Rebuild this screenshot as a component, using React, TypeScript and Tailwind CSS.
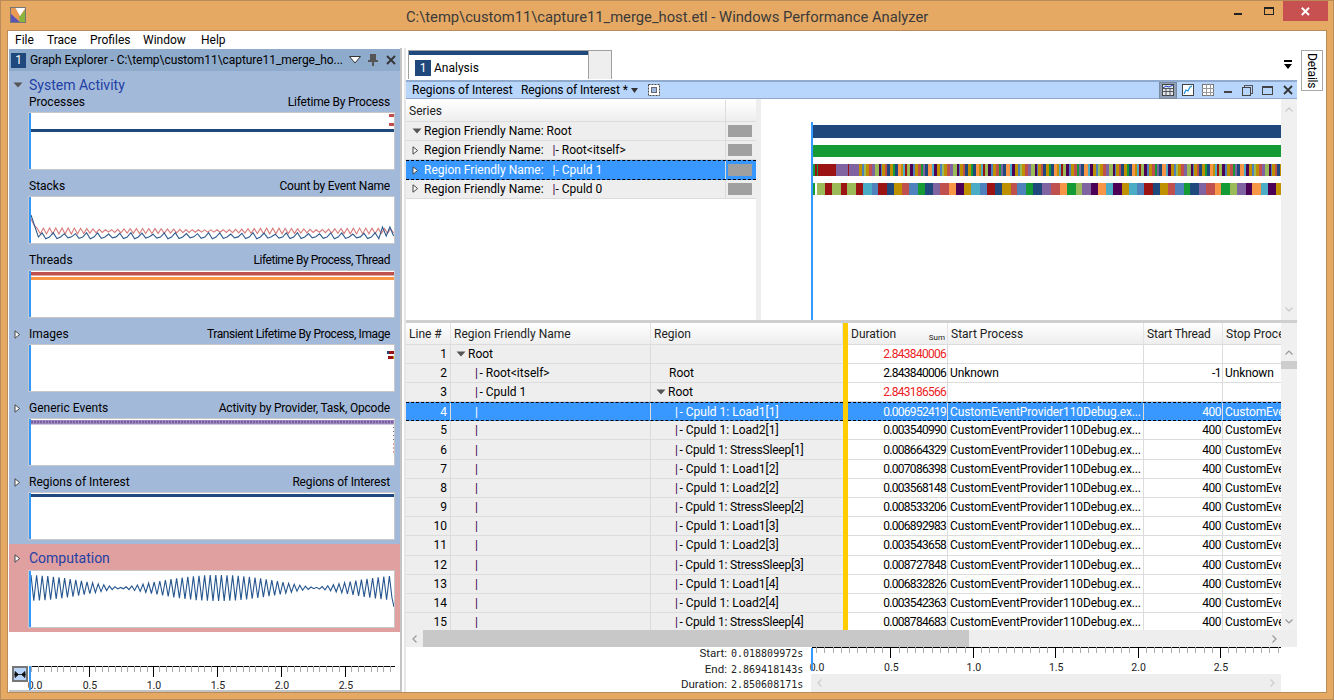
import React from "react";

const C = {
  navy: "#1f497d", green: "#149b35", lime: "#9bbb59", purple: "#8064a2", coral: "#c0504d",
  orange: "#f79646", teal: "#4bacc6", blue: "#4f81bd", red: "#9c1313", gold: "#bf9000", plum: "#4b0055",
};

function zigzag(x0: number, x1: number, step: number, f: (x: number, i: number) => number) {
  let d = "";
  let i = 0;
  for (let x = x0; x <= x1; x += step, i++) d += (i ? "L" : "M") + x.toFixed(1) + " " + f(x, i).toFixed(1);
  return d;
}

const row2: [string, number][] = [
  [C.green, 2], ["#ffffff", 2], [C.lime, 8], [C.red, 7], [C.lime, 9], [C.red, 6], [C.lime, 9], [C.red, 7], [C.teal, 9], [C.blue, 6], [C.red, 9], [C.navy, 7],
  [C.gold, 8], [C.coral, 7], [C.blue, 9], [C.green, 7], [C.navy, 8], [C.purple, 7], [C.coral, 9], [C.orange, 7], [C.plum, 8], [C.gold, 7], [C.teal, 9], [C.blue, 7],
  [C.red, 8], [C.navy, 7], [C.gold, 9], [C.coral, 6], [C.blue, 9], [C.green, 7], [C.navy, 9], [C.purple, 9], [C.coral, 9], [C.orange, 7], [C.green, 9], [C.lime, 6],
  [C.purple, 9], [C.plum, 7], [C.orange, 8], [C.teal, 7], [C.plum, 9], [C.gold, 7], [C.teal, 8], [C.blue, 7], [C.red, 9], [C.navy, 7], [C.gold, 8], [C.coral, 7],
  [C.blue, 9], [C.green, 6], [C.navy, 9], [C.purple, 7], [C.coral, 9], [C.orange, 6], [C.green, 9], [C.lime, 7], [C.purple, 9], [C.plum, 6], [C.orange, 9], [C.teal, 7], [C.plum, 8], [C.gold, 8],
];
const cycle: [string, number][] = [
  [C.gold, 3], [C.blue, 2], [C.lime, 2], [C.gold, 3], [C.coral, 3], [C.purple, 3], [C.lime, 4], [C.plum, 2], [C.blue, 1], [C.gold, 3], [C.coral, 2], [C.navy, 3],
  [C.gold, 3], [C.green, 2], [C.navy, 3], [C.orange, 3], [C.gold, 2], [C.teal, 2], [C.red, 2], [C.lime, 3], [C.plum, 3], [C.blue, 2], [C.gold, 3], [C.coral, 3], [C.green, 2], [C.purple, 2], [C.navy, 3], [C.orange, 4], [C.teal, 2], [C.plum, 3],
];
const row1: [string, number][] = [[C.green, 2], [C.red, 2], [C.green, 1], [C.red, 18], [C.purple, 12], [C.red, 1], [C.purple, 10]];
for (let used = 46, i = 0; used < 470; i++) {
  const c = cycle[i % cycle.length];
  row1.push(c);
  used += c[1];
}

function Segments({ y, data }: { y: number; data: [string, number][] }) {
  let x = 1;
  return (
    <>
      {data.map(([c, w], i) => {
        const el = <rect key={i} x={x} y={y} width={w} height={12} fill={c} />;
        x += w;
        return el;
      })}
    </>
  );
}

const TriRight = () => (
  <svg width="7" height="9" viewBox="0 0 7 9" className="block shrink-0">
    <path d="M1 .8 L5.6 4.5 L1 8.2 Z" fill="#fff" stroke="#444" strokeWidth="1" />
  </svg>
);
const TriDown = () => (
  <svg width="10" height="6" viewBox="0 0 10 6" className="block shrink-0">
    <path d="M0.5 .5 H9.5 L5 5.5 Z" fill="#555" />
  </svg>
);

function ChartBox({ h, children }: { h: number; children?: React.ReactNode }) {
  return (
    <div className="ml-[19px] w-[367px] border border-[#c8c8c8] bg-white">
      <svg width="365" height={h} className="block">
        {children}
        <rect x="0" y="0" width="2" height={h} fill="#3399ff" />
      </svg>
    </div>
  );
}

function GraphRow({ label, right, rightCls, first, expander, h, children }: { label: string; right: string; rightCls: string; first?: boolean; expander?: boolean; h: number; children?: React.ReactNode }) {
  return (
    <div>
      <div className={`flex h-[18px] items-start pr-[10px] ${first ? "" : "mt-[8px]"}`}>
        <div className="flex h-4 w-[20px] items-center pl-[5px]">{expander && <TriRight />}</div>
        <div className="flex-1 leading-4 text-black">{label}</div>
        <div className={`leading-4 text-black ${rightCls}`}>{right}</div>
      </div>
      <ChartBox h={h}>{children}</ChartBox>
    </div>
  );
}

function Ticks({ start, origin, major, w, labelY, dy, firstLabel }: { start: number; origin: number; major: number; w: number; labelY: number; dy: number; firstLabel: number }) {
  const minors: React.ReactNode[] = [];
  const step = major / 10;
  for (let i = 0; origin + i * step < w; i++) {
    const x = Math.round(origin + i * step) + 0.5;
    if (x < start) continue;
    if (i % 10 === 0) {
      if (i > 0) minors.push(<line key={i} x1={x} x2={x} y1={dy} y2={dy + 11} stroke="#000" strokeWidth="1" />);
    } else {
      minors.push(<line key={i} x1={x} x2={x} y1={dy} y2={dy + 6} stroke="#aaa" strokeWidth="1" />);
    }
  }
  return (
    <>
      <line x1={start} x2={w} y1={dy + 0.5} y2={dy + 0.5} stroke="#000" />
      {minors}
      {["0.0", "0.5", "1.0", "1.5", "2.0", "2.5"].map((t, i) => (
        <text key={t} x={i === 0 ? firstLabel : origin + i * major + 1} y={labelY} textAnchor="middle" fontSize="10.5" fill="#222" fontFamily="Roboto, sans-serif">{t}</text>
      ))}
    </>
  );
}

const friendly = ["", "Root<itself>", "Cpuld 1"];
const regionNames = [
  "Load1[1]", "Load2[1]", "StressSleep[1]", "Load1[2]", "Load2[2]", "StressSleep[2]", "Load1[3]", "Load2[3]", "StressSleep[3]", "Load1[4]", "Load2[4]", "StressSleep[4]",
];
const durations = [
  "2.843840006", "2.843840006", "2.843186566", "0.006952419", "0.003540990", "0.008664329", "0.007086398", "0.003568148", "0.008533206", "0.006892983", "0.003543658", "0.008727848", "0.006832826", "0.003542363", "0.008784683",
];
const lines = durations.map((_, i) => i + 1);
const Pipe = ({ sel }: { sel?: boolean }) => <span className={sel ? "text-white" : "text-[#3d0050]"}>|</span>;

const rowCls = (sel: boolean) =>
  `flex h-[19.2px] shrink-0 items-center whitespace-nowrap ${sel ? "border-y border-dashed border-black bg-[#3898ff] text-white" : "border-b border-[#dcdcdc]"}`;
const headCell = "flex h-full items-center border-r border-[#e4e4e4] pl-[3px] pt-[1px] text-[#222]";

function WinIconBtn({ children, w }: { children: React.ReactNode; w: string }) {
  return <div className={`flex h-[17px] items-center justify-center ${w}`}>{children}</div>;
}

export default function App() {
  return (
    <div className="flex h-[700px] w-[1334px] flex-col overflow-hidden border border-[#b98b58] bg-[#e5a964] text-[12px]" style={{ fontFamily: "Roboto, 'Noto Sans', sans-serif" }}>
      {/* Title bar */}
      <div className="flex h-[29px] shrink-0 items-start">
        <svg width="16" height="16" viewBox="0 0 16 16" className="mt-[6px] ml-[9px] shrink-0">
          <rect width="16" height="16" fill="#e89a55" />
          <path d="M0 6 L0 16 L11 16 Z" fill="#5a55b5" />
          <path d="M16 2 L16 16 L10 16 L9 10 Z" fill="#8ab43c" />
          <path d="M5 0 L16 0 L10 9 Z" fill="#fff" />
          <rect x=".5" y=".5" width="15" height="15" fill="none" stroke="#777" />
        </svg>
        <div className="ml-[380px] mt-[6px] w-[522px] whitespace-nowrap text-center text-[14.75px] leading-5 text-[#3a3a3a]">
          C:\temp\custom11\capture11_merge_host.etl - Windows Performance Analyzer
        </div>
        <div className="ml-auto flex">
          <svg width="12" height="12" className="mt-[6px] mr-[22px]"><rect x="4" y="6" width="8" height="2" fill="#222" /></svg>
          <svg width="12" height="10" className="mt-[6px] mr-[5px]"><rect x=".5" y=".5" width="9" height="7" fill="none" stroke="#222" /><rect x="0" y="0" width="10" height="2" fill="#222" /></svg>
          <div className="ml-[2px] mr-[5px] flex h-[20px] w-[45px] items-center justify-center bg-[#c75050]">
            <svg width="9" height="9"><path d="M.8 .8 L8 8 M8 .8 L.8 8" stroke="#fff" strokeWidth="2" /></svg>
          </div>
        </div>
      </div>

      {/* Client */}
      <div className="mx-[6px] flex h-[663px] w-[1320px] flex-col border border-[#b98b58] bg-white">
        {/* Menu */}
        <div className="flex h-[17px] shrink-0 items-center pl-[7px] leading-4 text-black">
          <span className="w-[32px]">File</span>
          <span className="w-[43px]">Trace</span>
          <span className="w-[53px]">Profiles</span>
          <span className="w-[58px]">Window</span>
          <span>Help</span>
        </div>

        <div className="flex min-h-0 flex-1">
          {/* Graph Explorer */}
          <div className="ml-[1px] flex w-[393px] shrink-0 flex-col border-r-2 border-b-2 border-[#c4c4c4] pt-[1px]">
            <div className="flex h-[22px] shrink-0 items-center bg-[#8fabcc] pl-[2px]">
              <div className="flex h-[15px] w-[15px] items-center justify-center bg-[#1f497d] text-white">1</div>
              <div className="ml-[4px] w-[313px] whitespace-nowrap tracking-[-0.06px] text-black">Graph Explorer - C:\temp\custom11\capture11_merge_ho...</div>
              <svg width="12" height="8" className="ml-[6px]"><path d="M.5 .5 H11.5 L6 7 Z" fill="#fff" stroke="#333" /></svg>
              <svg width="10" height="12" className="ml-[7px]"><path d="M2 0 H8 V6 H10 V8 H6 V12 H4 V8 H0 V6 H2 Z" fill="#555" /></svg>
              <svg width="10" height="10" className="ml-[8px]"><path d="M1 1 L9 9 M9 1 L1 9" stroke="#333" strokeWidth="1.8" /></svg>
            </div>

            <div className="flex h-[473px] shrink-0 flex-col bg-[#a3b9da]">
              <div className="flex h-[23px] shrink-0 items-start pt-[4px]">
                <div className="flex h-5 w-[20px] items-center pl-[4px]"><TriDown /></div>
                <div className="text-[14px] leading-5 text-[#1f3fa5]">System Activity</div>
              </div>
              <GraphRow first label="Processes" right="Lifetime By Process" rightCls="tracking-[-0.2px]" h={56}>
                <rect x="2" y="16" width="363" height="3" fill={C.navy} />
                <rect x="360" y="1" width="5" height="3" fill={C.coral} />
                <rect x="360" y="10" width="5" height="3" fill={C.coral} />
              </GraphRow>
              <GraphRow label="Stacks" right="Count by Event Name" rightCls="tracking-[-0.2px]" h={46}>
                <path d={zigzag(2, 365, 3.1, (x, i) => (x < 8 ? 22 + (x - 2) * 2 : 34 + (i % 2 ? 2.2 : -2.2) * (0.5 + 0.5 * Math.abs(Math.sin(x / 23) + Math.cos(x / 61)))))} fill="none" stroke="#d67c7a" strokeWidth="1.1" />
                <path d={zigzag(2, 365, 3.7, (x, i) => (x < 9 ? 18 + (x - 2) * 3 : x > 352 ? 35 + (i % 2 ? -5 : 4) : 39.5 + (i % 3 === 0 ? -3.5 : i % 3 === 1 ? 2 : 0.5) * (0.6 + 0.5 * Math.abs(Math.sin(x / 13)))))} fill="none" stroke="#2f5a8e" strokeWidth="1.1" />
              </GraphRow>
              <GraphRow label="Threads" right="Lifetime By Process, Thread" rightCls="tracking-[-0.44px]" h={46}>
                <rect x="2" y="1" width="363" height="3.5" fill={C.coral} />
                <rect x="2" y="6" width="363" height="3" fill={C.orange} />
              </GraphRow>
              <GraphRow expander label="Images" right="Transient Lifetime By Process, Image" rightCls="tracking-[-0.4px]" h={46}>
                <rect x="359" y="6" width="6" height="3" fill={C.red} />
                <rect x="358" y="6" width="2" height="3" fill={C.navy} />
                <rect x="359" y="11" width="5" height="3" fill={C.red} />
                <rect x="364" y="11" width="1" height="3" fill={C.gold} />
              </GraphRow>
              <GraphRow expander label="Generic Events" right="Activity by Provider, Task, Opcode" rightCls="tracking-[-0.2px]" h={46}>
                <rect x="2" y="1" width="363" height="4.5" fill="#a08cc0" />
                <line x1="2" x2="365" y1="3" y2="3" stroke="#7c5fa0" strokeWidth="2.5" strokeDasharray="2 1" />
                <line x1="364.5" x2="364.5" y1="8" y2="24" stroke="#667" strokeDasharray="1 3" />
                <line x1="364.5" x2="364.5" y1="24" y2="36" stroke="#d99" strokeDasharray="2 2" />
              </GraphRow>
              <GraphRow expander label="Regions of Interest" right="Regions of Interest" rightCls="tracking-[-0.16px]" h={46}>
                <rect x="2" y="1" width="363" height="3" fill={C.navy} />
              </GraphRow>
            </div>

            <div className="flex h-[88px] shrink-0 flex-col bg-[#e0a0a0] pt-[4px]">
              <div className="flex h-[22px] shrink-0 items-start">
                <div className="flex h-5 w-[20px] items-center pl-[5px]"><TriRight /></div>
                <div className="text-[14px] leading-5 text-[#1f3fa5]">Computation</div>
              </div>
              <ChartBox h={56}>
                <path
                  d={zigzag(2, 361, 2.8, (x, i) => {
                    const env = 0.6 + 12.4 * Math.pow(Math.abs(Math.cos((Math.PI * (x + 31 - 220)) / 194)), 1.25);
                    return 17 + (i % 2 ? env : -env);
                  }) + " L363 27 L365 36"}
                  fill="none"
                  stroke="#24558e"
                  strokeWidth="1.1"
                />
              </ChartBox>
            </div>

            <div className="flex flex-1 items-end">
              <div className="mb-[8px] ml-[3px] flex h-[16px] w-[16px] shrink-0 items-center justify-center border-2 border-[#777] bg-[#b8d4f8]">
                <svg width="12" height="7"><path d="M0 3.5 H12 M1 0.5 L4.5 3.5 L1 6.5 Z M11 0.5 L7.5 3.5 L11 6.5 Z" fill="#111" stroke="#111" strokeWidth=".8" /></svg>
              </div>
              <svg width="367" height="30" className="ml-[1px] block shrink-0 overflow-visible">
                <Ticks start={1} origin={-4} major={64} w={366} labelY={29} dy={6} firstLabel={6} />
                <rect x="0" y="6" width="2" height="24" fill="#3399ff" />
              </svg>
            </div>
          </div>

          {/* Right part */}
          <div className="ml-[2px] flex w-[893px] shrink-0 flex-col border-l-2 border-[#e6e6e6]">
            {/* Tabs */}
            <div className="flex h-[32px] shrink-0 items-start pt-[2px]">
              <div className="ml-[2px] flex h-[29px] w-[181px] border border-b-0 border-[#a0a0a0] border-t-[#a0a0a0]">
                <div className="w-full border-t-4 border-[#1f497d] bg-white pl-[6px] pt-[4px]">
                  <div className="flex items-center">
                    <div className="flex h-[16px] w-[16px] items-center justify-center bg-[#1f497d] text-white">1</div>
                    <span className="ml-[3px] text-black">Analysis</span>
                  </div>
                </div>
              </div>
              <div className="h-[29px] w-[23px] border border-b-0 border-l-0 border-[#a0a0a0] bg-[#eeeeee]" />
              <svg width="8" height="10" className="ml-[672px] mt-[10px]"><rect width="8" height="2" fill="#000" /><path d="M0 4 H8 L4 9 Z" fill="#000" /></svg>
            </div>

            {/* Analysis header */}
            <div className="flex h-[19px] shrink-0 items-center border-t-2 border-b border-[#8faacc] bg-[#b8d6fc] pl-[6px] text-black">
              <span className="w-[109px]">Regions of Interest</span>
              <span className="tracking-[-0.1px]">Regions of Interest *</span>
              <svg width="7" height="5" className="ml-[3px]"><path d="M0 0 H7 L3.5 5 Z" fill="#333" /></svg>
              <svg width="12" height="12" className="ml-[10px]"><rect x=".5" y=".5" width="11" height="11" fill="#fff" stroke="#444" strokeDasharray="2 1" /><rect x="3.5" y="3.5" width="5" height="5" fill="#9fb9dc" stroke="#667" /></svg>
              <div className="ml-auto flex items-center">
                <div className="flex h-[17px] w-[18px] items-center justify-center border border-[#7a8aa0] bg-[#8f9fb5]">
                  <svg width="12" height="12"><rect x=".5" y=".5" width="11" height="11" fill="#dfe6f0" stroke="#444" /><path d="M0 4.5 H12 M0 7.5 H12 M4 4 V12 M8 4 V12" stroke="#555" /><path d="M1 4 L4 2 L7 3 L11 1" stroke="#2040c0" fill="none" /></svg>
                </div>
                <WinIconBtn w="w-[22px]">
                  <svg width="12" height="12"><rect x=".5" y=".5" width="11" height="11" fill="#fff" stroke="#444" /><path d="M2 10 L4 6 L6 7 L8 3 L10 2" stroke="#1a90e0" fill="none" strokeWidth="1.2" /></svg>
                </WinIconBtn>
                <WinIconBtn w="w-[18px]">
                  <svg width="12" height="12"><rect x=".5" y=".5" width="11" height="11" fill="#fff" stroke="#777" /><path d="M0 4.5 H12 M0 8.5 H12 M4.5 0 V12 M8.5 0 V12" stroke="#999" /></svg>
                </WinIconBtn>
                <WinIconBtn w="w-[21px]"><svg width="8" height="8"><rect y="5" width="8" height="2" fill="#444" /></svg></WinIconBtn>
                <WinIconBtn w="w-[19px]"><svg width="11" height="11"><rect x="2.5" y=".5" width="8" height="8" fill="none" stroke="#555" /><rect x=".5" y="2.5" width="8" height="8" fill="#b8d6fc" stroke="#444" /></svg></WinIconBtn>
                <WinIconBtn w="w-[21px]"><svg width="11" height="9"><rect x=".5" y=".5" width="10" height="8" fill="none" stroke="#444" /><rect width="11" height="2" fill="#444" /></svg></WinIconBtn>
                <WinIconBtn w="w-[19px]"><svg width="10" height="10"><path d="M1 1 L9 9 M9 1 L1 9" stroke="#333" strokeWidth="1.8" /></svg></WinIconBtn>
              </div>
            </div>

            {/* Graph section */}
            <div className="flex h-[221px] shrink-0">
              <div className="w-[350px] shrink-0 pt-[1px]">
                <div className="flex h-[21.6px] items-stretch border-b border-[#dcdcdc] bg-gradient-to-b from-white to-[#eeeeee] text-[#222]">
                  <div className="flex w-[320px] items-center border-r border-[#dcdcdc] pl-[3px] pt-[1px]">Series</div>
                </div>
                {[
                  { t: "Root", ind: false, open: true },
                  { t: "|- Root<itself>", ind: true },
                  { t: "|- Cpuld 1", ind: true, sel: true },
                  { t: "|- Cpuld 0", ind: true },
                ].map((r) => (
                  <div key={r.t} className={`flex h-[19.4px] items-center whitespace-nowrap ${r.sel ? "border-y border-dashed border-black bg-[#3898ff] text-white" : "border-b border-[#dcdcdc] bg-[#eeeeee] text-black"}`}>
                    <div className="flex w-[18px] shrink-0 items-center pl-[6px]">{r.open ? <svg width="10" height="6"><path d="M.5 .5 H9.5 L5 5.5 Z" fill="#555" /></svg> : <TriRight />}</div>
                    <div className="flex w-[302px] shrink-0 items-center border-r border-[#dcdcdc]">
                      <span>Region Friendly Name: </span>
                      {r.ind ? (
                        <span className="ml-[9px]"><Pipe sel={r.sel} />{r.t.slice(1)}</span>
                      ) : (
                        <span className="ml-[3px]">{r.t}</span>
                      )}
                    </div>
                    <div className="ml-[2px] h-[12px] w-[24px] bg-[#a0a0a0]" />
                  </div>
                ))}
              </div>
              <div className="w-[5px] shrink-0 bg-[#eeeeee]" />
              <svg width="520" height="221" className="block shrink-0">
                <rect x="50" y="23" width="2" height="198" fill="#3399ff" />
                <g transform="translate(51 0)">
                  <rect x="1" y="26" width="468" height="13" fill={C.navy} />
                  <rect x="1" y="46" width="468" height="12" fill={C.green} />
                  <svg x="0" y="65" width="469" height="12"><Segments y={0} data={row1} /></svg>
                  <svg x="0" y="84" width="469" height="12"><Segments y={0} data={row2} /></svg>
                </g>
              </svg>
              <div className="flex w-[16px] shrink-0 flex-col items-center justify-between bg-[#f0f0f0] py-[8px]">
                <svg width="8" height="5"><path d="M.5 4.5 L4 1 L7.5 4.5" fill="none" stroke="#ccc" strokeWidth="1.3" /></svg>
                <svg width="8" height="5"><path d="M.5 .5 L4 4 L7.5 .5" fill="none" stroke="#ccc" strokeWidth="1.3" /></svg>
              </div>
            </div>

            <div className="h-[3px] shrink-0 bg-[#cfcfcf]" />

            {/* Table */}
            <div className="flex h-[307px] shrink-0 overflow-hidden">
              {/* frozen columns */}
              <div className="flex w-[437px] shrink-0 flex-col">
                <div className="flex h-[21.5px] shrink-0 border-b border-[#dcdcdc] bg-gradient-to-b from-white to-[#eeeeee]">
                  <div className={`${headCell} w-[45px]`}>Line #</div>
                  <div className={`${headCell} w-[200px]`}>Region Friendly Name</div>
                  <div className={`${headCell} w-[192px]`}>Region</div>
                </div>
                {lines.map((n, i) => {
                  const sel = i === 3;
                  const name = i > 2 ? regionNames[i - 3] : "";
                  return (
                    <div key={n} className={`${rowCls(sel)} ${sel ? "" : "bg-[#eeeeee] text-black"}`}>
                      <div className="flex h-full w-[45px] shrink-0 items-center justify-end border-r border-[#dcdcdc] pr-[3px]">{n}</div>
                      <div className="flex h-full w-[200px] shrink-0 items-center border-r border-[#dcdcdc]">
                        {i === 0 ? (
                          <span className="ml-[5px] flex items-center gap-[2px]"><TriDown />Root</span>
                        ) : (
                          <span className="ml-[24px]"><Pipe sel={sel} />{i < 3 && <span className="ml-[1.5px]">- {friendly[i]}</span>}</span>
                        )}
                      </div>
                      <div className="flex h-full w-[192px] shrink-0 items-center">
                        {i === 1 && <span className="ml-[18px]">Root</span>}
                        {i === 2 && <span className="ml-[5px] flex items-center gap-[2px]"><TriDown />Root</span>}
                        {i > 2 && (
                          <span className="ml-[24px]">
                            <Pipe sel={sel} />
                            <span className={`ml-[1.5px] ${name.startsWith("Stress") ? "tracking-[-0.2px]" : ""}`}>- Cpuld 1: {name}</span>
                          </span>
                        )}
                      </div>
                    </div>
                  );
                })}
              </div>
              <div className="w-[5px] shrink-0 bg-[#ffcc00]" />
              {/* scrolling columns */}
              <div className="flex w-[433px] shrink-0 flex-col overflow-hidden">
                <div className="flex h-[21.5px] shrink-0 border-b border-[#dcdcdc] bg-gradient-to-b from-white to-[#eeeeee]">
                  <div className={`${headCell} w-[100px] shrink-0 justify-between pr-[2px]`}>
                    <span>Duration</span>
                    <span className="mt-[9px] text-[8px]">Sum</span>
                  </div>
                  <div className={`${headCell} w-[196px] shrink-0`}>Start Process</div>
                  <div className={`${headCell} w-[79px] shrink-0 tracking-[-0.2px]`}>Start Thread</div>
                  <div className={`${headCell} w-[58px] shrink-0 overflow-hidden whitespace-nowrap border-r-0`}>Stop Process</div>
                </div>
                {durations.map((d, i) => {
                  const sel = i === 3;
                  const sum = i === 0 || i === 2;
                  const proc = i === 1 ? "Unknown" : "CustomEventProvider110Debug.ex...";
                  const stop = i === 1 ? "Unknown" : "CustomEventProvider";
                  return (
                    <div key={i} className={`${rowCls(sel)} ${sel ? "" : "bg-white text-black"}`}>
                      <div className={`flex h-full w-[100px] shrink-0 items-center justify-end border-r border-[#dcdcdc] pr-[1px] tracking-[-0.72px] ${sum ? "text-[#ee1c25]" : ""}`}>{d}</div>
                      <div className="flex h-full w-[196px] shrink-0 items-center border-r border-[#dcdcdc] pl-[2px] tracking-[-0.12px]">{sum ? "" : proc}</div>
                      <div className="flex h-full w-[79px] shrink-0 items-center justify-end border-r border-[#dcdcdc] pr-[1px] tracking-[-0.5px]">{sum ? "" : i === 1 ? "-1" : "400"}</div>
                      <div className="flex h-full w-[58px] shrink-0 items-center overflow-hidden pl-[2px] tracking-[-0.12px]">{sum ? "" : stop}</div>
                    </div>
                  );
                })}
              </div>
              <div className="flex w-[16px] shrink-0 flex-col bg-[#f0f0f0]">
                <div className="flex h-[38px] shrink-0 items-end justify-center pb-[6px] pt-[20px]">
                  <svg width="8" height="5"><path d="M.5 4.5 L4 1 L7.5 4.5" fill="none" stroke="#999" strokeWidth="1.2" /></svg>
                </div>
                <div className="h-[8px] w-full shrink-0 bg-[#cdcdcd]" />
                <div className="flex flex-1 items-end justify-center pb-[6px]">
                  <svg width="8" height="5"><path d="M.5 .5 L4 4 L7.5 .5" fill="none" stroke="#999" strokeWidth="1.2" /></svg>
                </div>
              </div>
            </div>

            {/* Horizontal scrollbar */}
            <div className="flex h-[17px] shrink-0 items-center bg-[#eeeeee]">
              <div className="flex h-full w-[17px] shrink-0 items-center justify-center">
                <svg width="5" height="8"><path d="M4.5 .5 L1 4 L4.5 7.5" fill="none" stroke="#999" strokeWidth="1.2" /></svg>
              </div>
              <div className="h-full w-[546px] shrink-0 bg-[#c8c8c8]" />
              <div className="ml-auto mr-[20px]">
                <svg width="5" height="8"><path d="M.5 .5 L4 4 L.5 7.5" fill="none" stroke="#999" strokeWidth="1.2" /></svg>
              </div>
            </div>

            {/* Bottom axis */}
            <div className="flex min-h-0 flex-1">
              <div className="-mt-[1px] w-[405px] shrink-0 pr-[8px] text-[11.5px] leading-[15.5px] text-[#222]">
                {[["Start:", "0.018809972s"], ["End:", "2.869418143s"], ["Duration:", "2.850608171s"]].map(([a, b]) => (
                  <div key={a} className="flex justify-end gap-[4px]">
                    <span>{a}</span>
                    <span className="w-[72px] text-[10px]" style={{ fontFamily: "'DejaVu Sans Mono', monospace" }}>{b}</span>
                  </div>
                ))}
              </div>
              <div className="flex w-[470px] shrink-0 flex-col">
                <svg width="470" height="27" className="block shrink-0 overflow-visible">
                  <Ticks start={1} origin={-3} major={82.4} w={470} labelY={24} dy={0} firstLabel={6} />
                  <rect x="0" y="1" width="2" height="23" fill="#3399ff" />
                </svg>
                <div className="flex h-[18px] items-center justify-between bg-[#eeeeee] px-[6px]">
                  <svg width="5" height="8"><path d="M4.5 .5 L1 4 L4.5 7.5" fill="none" stroke="#ccc" strokeWidth="1.2" /></svg>
                  <svg width="5" height="8"><path d="M.5 .5 L4 4 L.5 7.5" fill="none" stroke="#ccc" strokeWidth="1.2" /></svg>
                </div>
              </div>
            </div>
          </div>

          {/* Details tab */}
          <div className="ml-[4px] flex-1 pt-[2px]">
            <div className="flex h-[41px] w-[22px] items-start justify-center border border-[#a8a8a8] bg-white pt-[2px] text-black">
              <span className="text-[12px] leading-none tracking-[-0.2px] [writing-mode:vertical-rl]">Details</span>
            </div>
          </div>
        </div>
      </div>
    </div>
  );
}
